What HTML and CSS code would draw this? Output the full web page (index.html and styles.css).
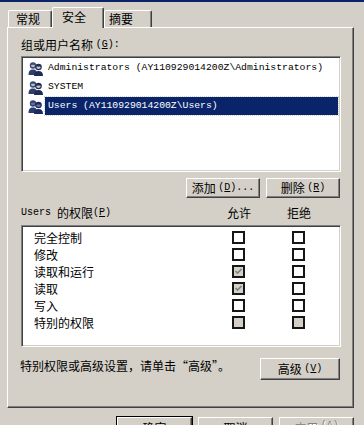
FILE: index.html
```html
<!DOCTYPE html>
<html>
<head>
<meta charset="utf-8">
<link rel="stylesheet" href="styles.css">
</head>
<body>
<div class="titleline"></div>
<div class="tabs">
  <div class="tab">常规</div>
  <div class="tab sel">安全</div>
  <div class="tab">摘要</div>
</div>
<div class="panel">
  <div class="label1">组或用户名称 <span class="lat">(<u>G</u>):</span></div>
  <div class="listbox">
    <div class="item">
      <svg class="ico" width="16" height="16" viewBox="0 0 16 16">
        <path d="M0.5 15 C0.5 11 2 9.5 5 9.5 C8 9.5 9 11 9 15 Z" fill="#2c3e6e"/>
        <circle cx="5" cy="5.5" r="3.2" fill="#3a4a70"/>
        <path d="M3 5.5 C3 7.5 7 7.5 7 5.5 C7 4.8 6 4.5 5 5 C4 4.5 3 4.8 3 5.5Z" fill="#b8bcc8"/>
        <path d="M6 16 C6 12.5 7.5 11 10.5 11 C13.5 11 15 12.5 15 16 Z" fill="#1d2b57"/>
        <circle cx="10.5" cy="7" r="3.3" fill="#202c52"/>
        <path d="M8.4 7.3 C8.4 9.6 12.6 9.6 12.6 7.3 C12.6 6.5 11.5 6.2 10.5 6.7 C9.5 6.2 8.4 6.5 8.4 7.3Z" fill="#c6c8d0"/>
      </svg>
      <span class="itxt">Administrators (AY110929014200Z\Administrators)</span>
    </div>
    <div class="item">
      <svg class="ico" width="16" height="16" viewBox="0 0 16 16">
        <path d="M0.5 15 C0.5 11 2 9.5 5 9.5 C8 9.5 9 11 9 15 Z" fill="#2c3e6e"/>
        <circle cx="5" cy="5.5" r="3.2" fill="#3a4a70"/>
        <path d="M3 5.5 C3 7.5 7 7.5 7 5.5 C7 4.8 6 4.5 5 5 C4 4.5 3 4.8 3 5.5Z" fill="#b8bcc8"/>
        <path d="M6 16 C6 12.5 7.5 11 10.5 11 C13.5 11 15 12.5 15 16 Z" fill="#1d2b57"/>
        <circle cx="10.5" cy="7" r="3.3" fill="#202c52"/>
        <path d="M8.4 7.3 C8.4 9.6 12.6 9.6 12.6 7.3 C12.6 6.5 11.5 6.2 10.5 6.7 C9.5 6.2 8.4 6.5 8.4 7.3Z" fill="#c6c8d0"/>
      </svg>
      <span class="itxt">SYSTEM</span>
    </div>
    <div class="item">
      <svg class="ico" width="16" height="16" viewBox="0 0 16 16">
        <path d="M0.5 15 C0.5 11 2 9.5 5 9.5 C8 9.5 9 11 9 15 Z" fill="#2a3a70"/>
        <circle cx="5" cy="5.5" r="3.2" fill="#34457a"/>
        <path d="M3 5.5 C3 7.5 7 7.5 7 5.5 C7 4.8 6 4.5 5 5 C4 4.5 3 4.8 3 5.5Z" fill="#6670a0"/>
        <path d="M6 16 C6 12.5 7.5 11 10.5 11 C13.5 11 15 12.5 15 16 Z" fill="#1c2a60"/>
        <circle cx="10.5" cy="7" r="3.3" fill="#1e2a5e"/>
        <path d="M8.4 7.3 C8.4 9.6 12.6 9.6 12.6 7.3 C12.6 6.5 11.5 6.2 10.5 6.7 C9.5 6.2 8.4 6.5 8.4 7.3Z" fill="#6c76a6"/>
      </svg>
      <span class="itxt hl">Users (AY110929014200Z\Users)</span>
    </div>
  </div>
  <div class="btnrow">
    <div class="btn w74">添加 <span class="lat">(<u>D</u>)...</span></div>
    <div class="btn w74">删除 <span class="lat">(<u>R</u>)</span></div>
  </div>
  <div class="permhead">
    <div class="pname"><span class="lat">Users </span>的权限<span class="lat">(<u>P</u>)</span></div>
    <div class="pcol">允许</div>
    <div class="pcol">拒绝</div>
  </div>
  <div class="permbox">
    <div class="prow"><div class="pname">完全控制</div><div class="pcol"><span class="cb"></span></div><div class="pcol"><span class="cb"></span></div></div>
    <div class="prow"><div class="pname">修改</div><div class="pcol"><span class="cb"></span></div><div class="pcol"><span class="cb"></span></div></div>
    <div class="prow"><div class="pname">读取和运行</div><div class="pcol"><span class="cb dis"><svg width="9" height="9" viewBox="0 0 9 9"><polyline points="1.5,4 3.5,6 7.5,2" fill="none" stroke="#808080" stroke-width="1.6"/></svg></span></div><div class="pcol"><span class="cb"></span></div></div>
    <div class="prow"><div class="pname">读取</div><div class="pcol"><span class="cb dis"><svg width="9" height="9" viewBox="0 0 9 9"><polyline points="1.5,4 3.5,6 7.5,2" fill="none" stroke="#808080" stroke-width="1.6"/></svg></span></div><div class="pcol"><span class="cb"></span></div></div>
    <div class="prow"><div class="pname">写入</div><div class="pcol"><span class="cb"></span></div><div class="pcol"><span class="cb"></span></div></div>
    <div class="prow"><div class="pname">特别的权限</div><div class="pcol"><span class="cb dis"></span></div><div class="pcol"><span class="cb dis"></span></div></div>
  </div>
  <div class="hintrow">
    <div class="hint">特别权限或高级设置，请单击“高级”。</div>
    <div class="btn w80 tall">高级 <span class="lat">(<u>V</u>)</span></div>
  </div>
</div>
<div class="bottom">
  <div class="btn w75 def">确定</div>
  <div class="btn w75">取消</div>
  <div class="btn w75 disabled">应用 <span class="lat">(<u>A</u>)</span></div>
</div>
</body>
</html>
```

FILE: styles.css
```css
* { box-sizing: border-box; }
html, body { margin: 0; padding: 0; }
body {
  width: 364px;
  height: 425px;
  overflow: hidden;
  background: #d4d0c8;
  font-family: "Noto Sans CJK SC", "Liberation Sans", sans-serif;
  font-size: 12px;
  line-height: 14px;
  color: #000;
}
.lat {
  font-family: "Liberation Mono", "Noto Sans CJK SC", monospace;
  font-size: 10px;
  line-height: 10px;
}
u { text-decoration: underline; text-underline-offset: 1px; }
.titleline { height: 2px; background: #0a246a; }
.tabs {
  height: 25px;
  display: flex;
  align-items: flex-end;
  padding-left: 8px;
}
.tab {
  height: 17px;
  padding: 1px 0 0 7px;
  border-top: 1px solid #fff;
  border-left: 1px solid #fff;
  border-right: 1px solid #404040;
  border-radius: 2px 2px 0 0;
  box-shadow: inset -1px 0 0 #808080;
  background: #d4d0c8;
  width: 44px;
  overflow: hidden;
}
.tab:nth-child(3) { width: 48px; padding-left: 4px; }
.tab.sel {
  height: 21px;
  width: 52px;
  margin-bottom: -1px;
  padding: 2px 0 0 9px;
  position: relative;
  z-index: 1;
}
.panel {
  margin-left: 7px;
  width: 347px;
  height: 381px;
  border-top: 1px solid #fff;
  border-left: 1px solid #fff;
  border-right: 1px solid #404040;
  border-bottom: 1px solid #404040;
  box-shadow: inset -1px -1px 0 #808080;
  padding: 0 12px 0 13px;
  display: flex;
  flex-direction: column;
  overflow: hidden;
}
.label1 {
  margin-top: 10px;
  height: 14px;
  display: flex;
  align-items: center;
  white-space: pre;
}
.listbox, .permbox {
  background: #fff;
  border-top: 1px solid #808080;
  border-left: 1px solid #808080;
  border-right: 1px solid #fff;
  border-bottom: 1px solid #fff;
  box-shadow: inset 1px 1px 0 #404040, inset -1px -1px 0 #d4d0c8;
  flex: none;
}
.listbox {
  margin-top: 4px;
  height: 116px;
  padding: 1px 2px 0 2px;
}
.item {
  height: 19px;
  display: flex;
  align-items: center;
  padding-left: 4px;
}
.ico { flex: none; margin-right: 1px; }
.itxt {
  font-family: "Liberation Mono", monospace;
  font-size: 9.75px;
  line-height: 18px;
  height: 18px;
  padding-left: 3px;
  flex: 1;
  white-space: nowrap;
}
.itxt.hl {
  background: #0a246a;
  color: #fff;
  outline: 1px dotted #d0d0d0;
}
.btnrow {
  margin-top: 6px;
  display: flex;
  justify-content: flex-end;
  gap: 6px;
  padding-right: 1px;
  flex: none;
}
.btn {
  height: 20px;
  flex: none;
  background: #d4d0c8;
  border-top: 1px solid #fff;
  border-left: 1px solid #fff;
  border-right: 1px solid #404040;
  border-bottom: 1px solid #404040;
  box-shadow: inset -1px -1px 0 #808080;
  display: flex;
  align-items: center;
  justify-content: center;
  white-space: pre;
}
.w74 { width: 74px; }
.w80 { width: 80px; }
.w75 { width: 75px; height: 23px; align-items: flex-start; padding-top: 3px; }
.tall { height: 22px; }
.permhead {
  margin-top: 8px;
  height: 14px;
  display: grid;
  grid-template-columns: 1fr 60px 60px;
  padding-right: 12px;
  flex: none;
}
.pname { display: flex; align-items: center; white-space: pre; }
.pcol { display: flex; justify-content: center; align-items: center; }
.permbox {
  margin-top: 5px;
  height: 122px;
  padding: 3px 12px 0 2px;
}
.prow {
  height: 17px;
  display: grid;
  grid-template-columns: 1fr 60px 60px;
  align-items: center;
}
.prow .pname { padding-left: 10px; }
.cb {
  width: 13px;
  height: 13px;
  border: 2px solid #161616;
  background: #fff;
  display: flex;
  align-items: center;
  justify-content: center;
}
.cb.dis { background: #d4d0c8; }
.hintrow {
  margin-top: 11px;
  display: flex;
  justify-content: space-between;
  align-items: flex-start;
  padding-right: 1px;
  flex: none;
}
.hint { margin-left: -1px; padding-top: 1px; height: 16px; white-space: nowrap; }
.bottom {
  margin-top: 9px;
  display: flex;
  gap: 6px;
  padding-left: 117px;
}
.btn.def {
  outline: 1px solid #000;
  outline-offset: 0;
}
.btn.disabled { color: #808080; text-shadow: 1px 1px 0 #fff; }
```
